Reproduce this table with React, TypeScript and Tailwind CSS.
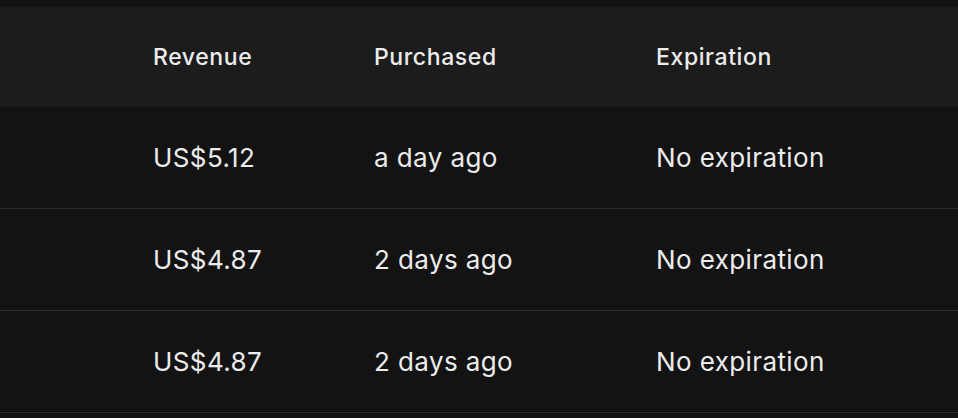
import React from "react";

const rows = [
    { revenue: "US$5.12", purchased: "a day ago", expiration: "No expiration" },
    { revenue: "US$4.87", purchased: "2 days ago", expiration: "No expiration" },
    { revenue: "US$4.87", purchased: "2 days ago", expiration: "No expiration" },
];

const cols = "grid grid-cols-[153px_221px_282px_1fr] items-center";

export default function App() {
    return (
        <div
            className="min-h-[418px] w-full bg-[#131313] pt-[7px] text-[#ececec]"
            style={{ fontFamily: "Inter, 'Noto Sans', sans-serif" }}
        >
            <div className={`${cols} h-[100px] bg-[#1c1c1c] text-[23px] font-medium tracking-[0.6px]`}>
                <div />
                <div>Revenue</div>
                <div>Purchased</div>
                <div>Expiration</div>
            </div>
            {rows.map((r, i) => (
                <div key={i} className={`${cols} h-[102px] border-b border-[#2f2f2f] text-[26px] tracking-[0.4px]`}>
                    <div />
                    <div>{r.revenue}</div>
                    <div>{r.purchased}</div>
                    <div>{r.expiration}</div>
                </div>
            ))}
        </div>
    );
}
